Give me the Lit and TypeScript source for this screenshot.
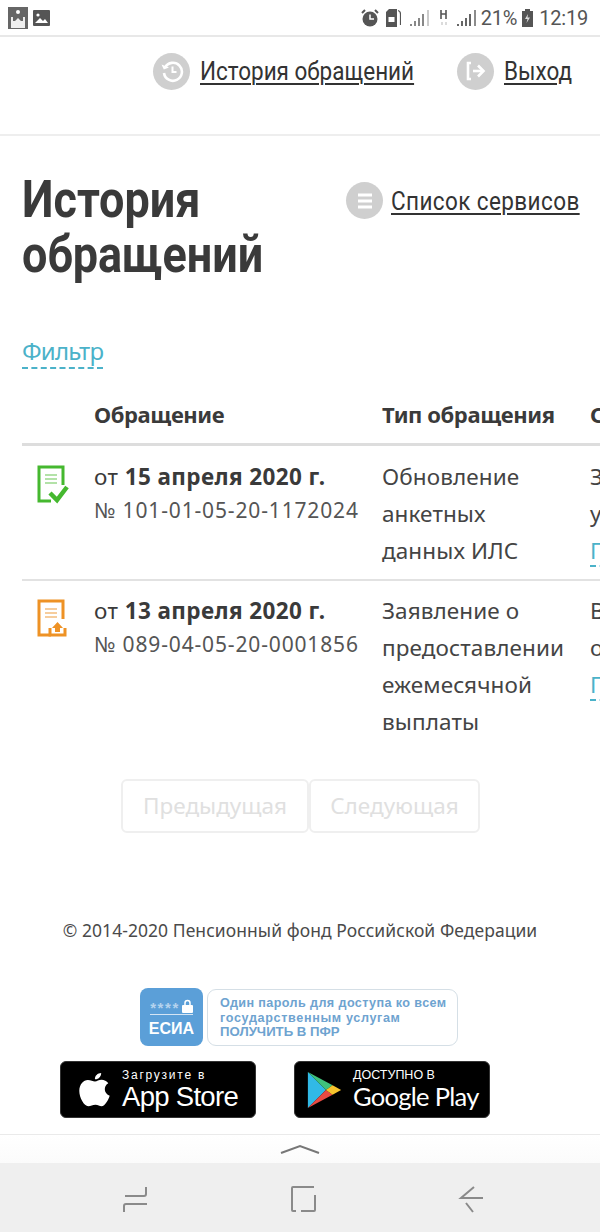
import { LitElement, html, css, svg } from "lit";
import { customElement } from "lit/decorators.js";

@customElement("app-root")
export class AppRoot extends LitElement {
  static styles = css`
    :host { display: block; width: 600px; height: 1232px; position: relative; overflow: hidden; background: #fff; font-family: "Noto Sans", "Open Sans", sans-serif; color: #3a3a3a; }
    .status { height: 37px; box-sizing: border-box; border-bottom: 2px solid #e8e8e8; display: flex; align-items: center; padding: 0 12px 0 8px; gap: 5px; color: #555; background: #fff; }
    .status svg { display: block; }
    .spacer { flex: 1; }
    .stext { font: 20px/36px "Roboto", sans-serif; color: #555; letter-spacing: -0.2px; }
    .topnav { height: 99px; box-sizing: border-box; border-bottom: 2px solid #eee; display: flex; justify-content: flex-end; padding: 15px 29px 0 0; gap: 43px; align-items: flex-start; }
    .nl { display: flex; align-items: center; gap: 10px; height: 38px; }
    .circle { width: 37px; height: 37px; border-radius: 50%; background: #cfcfcf; display: flex; align-items: center; justify-content: center; flex: none; }
    .lnk { display: inline-block; white-space: nowrap; font: 26px/30px "Roboto", sans-serif; color: #333; text-decoration: underline; text-underline-offset: 3px; text-decoration-thickness: 1.5px; transform: scaleX(0.865); transform-origin: left center; }
    .w-hist { width: 214px; }
    .w-exit { width: 67px; }
    .w-svc { width: 188px; letter-spacing: 0.47px; }
    .headrow { display: flex; justify-content: space-between; padding: 36px 21px 0 22px; }
    h1 { margin: 0; font: 700 52px/55px "Roboto", sans-serif; color: #3a3a3a; transform: scaleX(0.865); transform-origin: left center; white-space: nowrap; width: 242px; }
    .svc { display: flex; align-items: center; gap: 8px; height: 37px; margin-top: 10px; }
    .filter { margin: 52px 0 0 22px; display: inline-block; font: 24px/33px "Noto Sans", sans-serif; color: #4bb2c9; border-bottom: 2px dashed #4bb2c9; letter-spacing: -0.8px; }
    .tbl { margin: 23px 0 0 22px; width: 578px; overflow: hidden; font-family: "Noto Sans", sans-serif; }
    .row { display: grid; grid-template-columns: 72px 288px 208px 100px; width: 668px; }
    .thead { border-bottom: 3px solid #ddd; font-weight: 700; font-size: 22px; line-height: 44px; color: #3a3a3a; letter-spacing: -0.4px; height: 51px; align-items: start; }
    .r1 { height: 133px; border-bottom: 2px solid #e2e2e2; }
    .r2 { height: 159px; }
    .ic { padding: 19px 0 0 15px; }
    .date { font-size: 22.5px; line-height: 37px; padding-top: 12px; color: #3a3a3a; letter-spacing: 0.4px; white-space: nowrap; }
    .num { font-size: 21px; line-height: 30px; color: #555; letter-spacing: 0.85px; white-space: nowrap; }
    .type { font-size: 22.5px; line-height: 37px; padding-top: 12px; color: #444; letter-spacing: 0.1px; }
    .c4 { font-size: 22.5px; line-height: 37px; padding-top: 12px; color: #444; }
    .r2 .date, .r2 .type, .r2 .c4 { padding-top: 11px; }
    .r2 .ic { padding-top: 18px; }
    .tl { color: #4bb2c9; border-bottom: 2px dashed #4bb2c9; line-height: 28px; display: inline-block; }
    .pager { display: flex; margin: 39px 0 0 121px; height: 54px; }
    .btn { box-sizing: border-box; height: 54px; border: 2px solid #efefef; border-radius: 6px; font-size: 22.5px; line-height: 50px; color: #e0e0e0; text-align: center; }
    .b-prev { width: 188px; }
    .b-next { width: 171px; }
    .copy { text-align: center; font-size: 17.5px; line-height: 24px; margin-top: 85px; color: #4a4a4a; letter-spacing: 0.06px; }
    .esia { display: flex; margin: 46px 0 0 140px; gap: 4px; }
    .esq { width: 63px; height: 58px; border-radius: 8px; background: #5b9fd8; color: #fff; display: flex; flex-direction: column; align-items: center; font: 700 16px/20px "Liberation Sans", sans-serif; box-sizing: border-box; padding-top: 6px; }
    .stars { display: flex; align-items: flex-end; gap: 2px; height: 20px; font: 700 15px/13px "Liberation Sans", sans-serif; color: #b5d3ee; letter-spacing: 1.6px; margin-bottom: 4px; border-bottom: 1px solid #d5e5f4; }
    .esb { width: 251px; height: 57px; box-sizing: border-box; border: 1px solid #d5dfe6; border-radius: 9px; padding: 6px 0 0 12px; font: 700 12.6px/14.5px "Liberation Sans", sans-serif; color: #6ea3d0; margin-top: 1px; }
    .esb div { white-space: nowrap; }
    .e1 { letter-spacing: 0.4px; }
    .e2 { letter-spacing: 0.65px; }
    .e3 { font-size: 13.2px; }
    .stores { display: flex; margin: 15px 0 0 60px; gap: 38px; }
    .badge { width: 196px; height: 57px; box-sizing: border-box; background: #000; border: 1px solid #333; border-radius: 6px; color: #fff; display: flex; align-items: center; }
    .badge svg { flex: none; }
    .b1 { padding-left: 17px; gap: 11px; }
    .b2 { padding-left: 12px; gap: 11px; }
    .bt { display: flex; flex-direction: column; font-family: "Liberation Sans", sans-serif; white-space: nowrap; }
    .bt small { font-size: 12px; line-height: 14px; letter-spacing: 1.75px; }
    .bt span { font-size: 27.5px; line-height: 29px; letter-spacing: -0.7px; }
    .b2 .bt small { letter-spacing: 0; font-size: 12.5px; }
    .b2 .bt span { font-family: "Lato", sans-serif; font-size: 25.5px; letter-spacing: -0.7px; }
    .chromebar { position: absolute; left: 0; right: 0; top: 1134px; height: 29px; background: linear-gradient(#fff, #fbfbfb); border-top: 1px solid #eaeaea; box-sizing: border-box; display: flex; justify-content: center; }
    .chev { margin-top: 8px; }
    .navbar { position: absolute; left: 0; right: 0; top: 1163px; height: 69px; background: #efefef; }
    .navbar svg { display: block; }
    .ml2 { margin-left: 2px; }
    .ml3 { margin-left: 3px; }
    .ml4 { margin-left: 4px; }
    .mln { margin-left: -2px; }
    .ml1 { margin-left: 1px; }
  `;

  circleHistory() {
    return html`<span class="circle"><svg width="24" height="24" viewBox="0 0 24 24" fill="none" stroke="#fff" stroke-width="2.6"><path d="M5 8.5A9 9 0 1 1 4 14"/><path d="M1.5 5.5 L3.8 10.5 L9 8.5Z" fill="#fff" stroke="none"/><path d="M12.5 7.5V13H16.5" stroke-width="2"/></svg></span>`;
  }
  circleExit() {
    return html`<span class="circle"><svg width="24" height="24" viewBox="0 0 24 24" fill="none" stroke="#fff" stroke-width="2.6"><path d="M7 4H4V20H7"/><path d="M9 12H19"/><path d="M14 6.5 L19.5 12 L14 17.5"/></svg></span>`;
  }
  circleList() {
    return html`<span class="circle"><svg width="22" height="22" viewBox="0 0 22 22" fill="none" stroke="#fff" stroke-width="3.2"><path d="M4 5H18M4 11H18M4 17H18"/></svg></span>`;
  }
  docIcon(color: string, light: string, extra: unknown) {
    return html`<svg width="32" height="40" viewBox="0 0 32 40" fill="none"><path d="M14 36H2V2H26V20" stroke="${color}" stroke-width="3"/><path d="M8 10H20M8 14H20M8 18H20" stroke="${light}" stroke-width="1.6"/>${extra}</svg>`;
  }

  render() {
    const check = svg`<path d="M13 28 L20 35 L30 22" stroke="#45b82f" stroke-width="4.5"/>`;
    const up = svg`<path d="M13 29V36H28V29" stroke="#ee9225" stroke-width="3"/><path d="M20.5 23 L26 29H23V33H18V29H15Z" fill="#ee9225"/>`;
    return html`
      <div class="status">
        <svg width="20" height="22" viewBox="0 0 20 22"><rect width="20" height="22" fill="#666"/><circle cx="10" cy="5" r="2" fill="#fff"/><path d="M3 21V10h2v4h2l3-3 3 3h2v-4h2v11z" fill="#eee"/></svg>
        <svg width="17" height="16" viewBox="0 0 17 16"><rect width="17" height="16" rx="1" fill="#555"/><circle cx="5" cy="5" r="1.6" fill="#fff"/><path d="M2 13 L7 8 L10 11 L12 9 L15 13Z" fill="#fff"/></svg>
        <span class="spacer"></span>
        <svg width="18" height="18" viewBox="0 0 18 18"><circle cx="9" cy="10" r="7.5" fill="#555"/><path d="M9 5.500V10H13" stroke="#fff" stroke-width="1.5" fill="none"/><path d="M1 4 L4 1M17 4 L14 1" stroke="#555" stroke-width="2"/></svg>
        <svg class="ml2" width="15" height="18" viewBox="0 0 15 18"><path d="M0 3 L3 0H11V18H0Z" fill="#555"/><path d="M12 1.500 Q14.500 2 14.500 5V16" stroke="#555" stroke-width="1.2" fill="none"/><rect x="2.500" y="8" width="6" height="5" fill="#fff"/></svg>
        <svg class="ml3" width="22" height="18" viewBox="0 0 22 18"><path d="M2 15V17M6 12V17M10 9V17M14 5V17" stroke="#888" stroke-width="2"/><path d="M19 1V17" stroke="#bbb" stroke-width="1.5"/></svg>
        <svg class="ml4" width="8" height="18" viewBox="0 0 8 18"><path d="M1 1V10M6 1V10M1 5H6" stroke="#555" stroke-width="1.6"/><path d="M2 13V16M6 13V16" stroke="#ccc" stroke-width="1.4"/></svg>
        <svg class="ml3" width="22" height="18" viewBox="0 0 22 18"><path d="M2 15V17M6 12V17M10 9V17M14 5V17" stroke="#666" stroke-width="2"/><path d="M19 1V17" stroke="#666" stroke-width="1.5"/></svg>
        <span class="stext mln">21%</span>
        <svg width="11" height="18" viewBox="0 0 11 18"><path d="M3 0H8V2H11V18H0V2H3Z" fill="#555"/><path d="M6 5 L3 10H5.500L4.500 14 L8 8.500H5.500Z" fill="#ddd"/></svg>
        <span class="stext ml1">12:19</span>
      </div>
      <div class="topnav">
        <div class="nl">${this.circleHistory()}<span class="lnk w-hist">История обращений</span></div>
        <div class="nl">${this.circleExit()}<span class="lnk w-exit">Выход</span></div>
      </div>
      <div class="headrow">
        <h1>История<br />обращений</h1>
        <div class="svc">${this.circleList()}<span class="lnk w-svc">Список сервисов</span></div>
      </div>
      <div class="filter">Фильтр</div>
      <div class="tbl">
        <div class="row thead"><span></span><span>Обращение</span><span>Тип обращения</span><span>Статус</span></div>
        <div class="row r1">
          <div class="ic">${this.docIcon("#45b82f", "#9bd98c", check)}</div>
          <div><div class="date">от <b>15 апреля 2020 г.</b></div><div class="num">№ 101-01-05-20-1172024</div></div>
          <div class="type">Обновление<br />анкетных<br />данных ИЛС</div>
          <div class="c4">Зарегистрировано<br />услуга<br /><span class="tl">Подробнее</span></div>
        </div>
        <div class="row r2">
          <div class="ic">${this.docIcon("#ee9225", "#f3bd7d", up)}</div>
          <div><div class="date">от <b>13 апреля 2020 г.</b></div><div class="num">№ 089-04-05-20-0001856</div></div>
          <div class="type">Заявление о<br />предоставлении<br />ежемесячной<br />выплаты</div>
          <div class="c4">В работе<br />обращение<br /><span class="tl">Подробнее</span></div>
        </div>
      </div>
      <div class="pager">
        <div class="btn b-prev">Предыдущая</div>
        <div class="btn b-next">Следующая</div>
      </div>
      <div class="copy">© 2014-2020 Пенсионный фонд Российской Федерации</div>
      <div class="esia">
        <div class="esq"><div class="stars">****<svg width="11" height="15" viewBox="0 0 11 15"><path d="M3 7V4a2.500 2.500 0 0 1 5 0V7" stroke="#fff" stroke-width="1.5" fill="none"/><rect y="6" width="11" height="8" rx="1" fill="#fff"/></svg></div>ЕСИА</div>
        <div class="esb"><div class="e1">Один пароль для доступа ко всем</div><div class="e2">государственным услугам</div><div class="e3">ПОЛУЧИТЬ В ПФР</div></div>
      </div>
      <div class="stores">
        <div class="badge b1">
          <svg width="33" height="38" viewBox="0 0 34 40"><path d="M24 2c.3 3-2.600 7-6.500 6.800C17 5 20.500 2 24 2ZM17.500 11c2 0 4-1.800 7-1.800 2.500 0 5.500 1.300 7 3.800-5.500 3.300-4.500 11 1.500 13-1.500 4.500-5 11-8.500 11-2.500 0-3.500-1.500-6.500-1.500S13 37 10.500 37C6 37 1 28 1 21c0-7 4.500-11.500 9-11.500 3 0 5.500 1.500 7.500 1.500Z" fill="#fff"/></svg>
          <div class="bt"><small>Загрузите в</small><span>App Store</span></div>
        </div>
        <div class="badge b2">
          <svg width="35" height="38" viewBox="0 0 35 40"><path d="M0 1V39L19 20Z" fill="#31b9e6"/><path d="M0 1 L26 15 L19 20Z" fill="#3fc27c"/><path d="M0 39 L26 25 L19 20Z" fill="#e84a43"/><path d="M26 15 L35 20 L26 25 L19 20Z" fill="#f7c32d"/></svg>
          <div class="bt"><small>ДОСТУПНО В</small><span>Google Play</span></div>
        </div>
      </div>
      <div class="chromebar"><svg class="chev" width="40" height="14" viewBox="0 0 40 14"><path d="M1 10 L20 3 L39 10" stroke="#777" stroke-width="2" fill="none"/></svg></div>
      <div class="navbar">
        <svg width="600" height="69" viewBox="0 0 600 69" fill="none" stroke="#8a8a8a" stroke-width="2"><path d="M146 24V31Q146 33 144 33H125"/><path d="M147 41H126Q124 41 124 43V49"/><path d="M314 24H293Q292 24 292 25V47Q292 48 293 48H296M301 48H314Q315 48 315 47V32"/><path d="M483 35H461L474 24M466 40L473 49"/></svg>
      </div>
    `;
  }
}
